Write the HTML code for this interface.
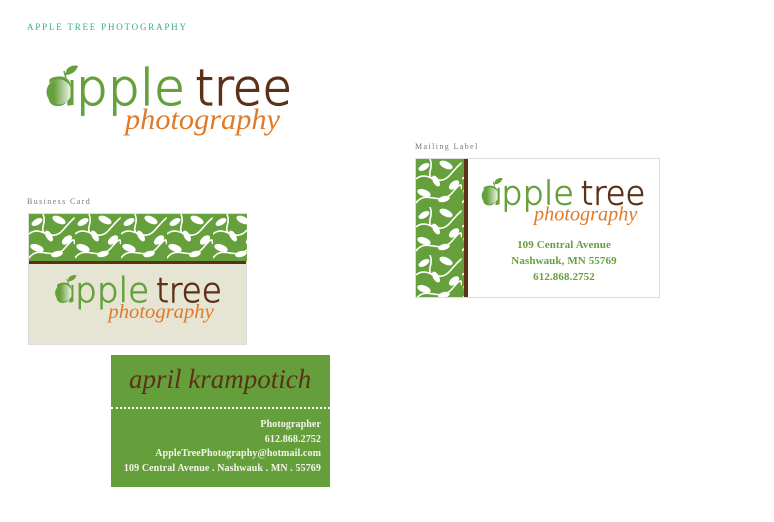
<!DOCTYPE html>
<html><head><meta charset="utf-8"><style>
body{margin:0;width:774px;height:522px;background:#fff;position:relative;overflow:hidden;font-family:"Liberation Serif",serif}
.abs{position:absolute}
.lbl{font-size:8px;color:#777;letter-spacing:1.4px}
</style></head><body>
<svg width="0" height="0" style="position:absolute">
<defs>
<pattern id="leaf" width="46" height="48" patternUnits="userSpaceOnUse">
<rect width="46" height="48" fill="#66a03c"/>
<g fill="#fff">
<ellipse cx="8" cy="8" rx="6" ry="3" transform="rotate(-30 8 8)"/>
<ellipse cx="30" cy="6" rx="7" ry="3.5" transform="rotate(25 30 6)"/>
<ellipse cx="20" cy="22" rx="6" ry="3" transform="rotate(60 20 22)"/>
<ellipse cx="38" cy="26" rx="6" ry="3.5" transform="rotate(-40 38 26)"/>
<ellipse cx="8" cy="34" rx="7" ry="3.5" transform="rotate(20 8 34)"/>
<ellipse cx="28" cy="40" rx="6" ry="3" transform="rotate(-15 28 40)"/>
</g>
<g fill="none" stroke="#fff" stroke-width="1.6">
<path d="M0 20 C12 10 22 30 34 16 S46 4 46 4"/>
<path d="M0 44 C10 30 24 48 36 34 S44 28 46 30"/>
<path d="M14 0 C18 10 10 14 16 20"/>
</g>
</pattern>
<symbol id="logo" viewBox="0 0 247 78">
<path d="M22 5 C26 1 31 1 33 2 C31 8 26 11 20 11 Z" fill="#66a03c"/>
<path d="M19 7 L21 14" stroke="#66a03c" stroke-width="1.5"/>
<defs><linearGradient id="g" x1="0" x2="1"><stop offset="0" stop-color="#66a03c"/><stop offset="0.3" stop-color="#66a03c"/><stop offset="1" stop-color="#f4f7ee"/></linearGradient></defs>
<text x="0" y="41" font-family="DejaVu Sans, Liberation Sans, sans-serif" font-weight="200" font-size="50" fill="#66a03c" stroke="#66a03c" stroke-width="1.3" textLength="140" lengthAdjust="spacingAndGlyphs">apple</text>
<circle cx="14" cy="28" r="12.5" fill="url(#g)"/>
<rect x="25.5" y="16" width="3" height="25" fill="#66a03c"/>
<text x="150" y="41" font-family="DejaVu Sans, Liberation Sans, sans-serif" font-weight="200" font-size="50" fill="#5b3219" stroke="#5b3219" stroke-width="1.3" textLength="97" lengthAdjust="spacingAndGlyphs">tree</text>
<text x="80" y="65" font-family="Liberation Serif, serif" font-style="italic" font-size="30" fill="#e07a28" textLength="155" lengthAdjust="spacingAndGlyphs">photography</text>
</symbol>
</defs></svg>

<div class="abs" style="left:27px;top:22px;font-size:9px;color:#33ad8c;letter-spacing:1.8px">APPLE TREE PHOTOGRAPHY</div>
<svg class="abs" style="left:45px;top:64px" width="247" height="78"><use href="#logo"/></svg>

<div class="abs lbl" style="left:27px;top:197px">Business Card</div>
<div class="abs" style="left:28px;top:213px;width:219px;height:132px;background:#e6e4d2;border:1px solid #ddd;box-sizing:border-box">
<svg width="218" height="47" style="display:block"><rect width="218" height="47" fill="url(#leaf)"/></svg>
<div style="height:3px;background:#5b3219"></div>
</div>
<svg class="abs" style="left:54px;top:274px" width="168" height="53"><use href="#logo"/></svg>

<div class="abs" style="left:111px;top:355px;width:219px;height:132px;background:#659f3c">
<div class="abs" style="left:18px;top:9px;font-size:27px;font-style:italic;color:#5b3219;white-space:nowrap">april krampotich</div>
<div class="abs" style="left:0;top:52px;width:219px;border-top:2px dotted #fff"></div>
<div class="abs" style="right:9px;top:63px;text-align:right;color:#f4f4ea;font-weight:bold;font-size:10px;letter-spacing:0.1px;line-height:14.5px;white-space:nowrap">Photographer<br>612.868.2752<br>AppleTreePhotography@hotmail.com<br>109 Central Avenue . Nashwauk . MN . 55769</div>
</div>

<div class="abs lbl" style="left:415px;top:142px">Mailing Label</div>
<div class="abs" style="left:415px;top:158px;width:245px;height:140px;border:1px solid #ddd;box-sizing:border-box;background:#fff">
<svg class="abs" style="left:0;top:0" width="48" height="138"><rect width="48" height="138" fill="url(#leaf)"/></svg>
<div class="abs" style="left:48px;top:0;width:4px;height:138px;background:#5b3219"></div>
<div class="abs" style="left:52px;top:78px;width:192px;text-align:center;color:#66a03c;font-weight:bold;font-size:11px;letter-spacing:0.1px;line-height:16px">109 Central Avenue<br>Nashwauk, MN 55769<br>612.868.2752</div>
</div>
<svg class="abs" style="left:480px;top:177px" width="166" height="52"><use href="#logo"/></svg>
</body></html>
